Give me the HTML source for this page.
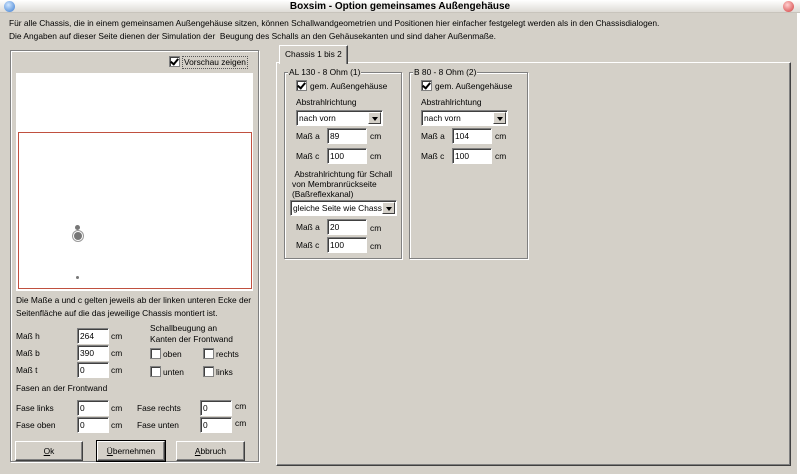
<!DOCTYPE html>
<html><head><meta charset="utf-8"><style>
*{box-sizing:border-box;margin:0;padding:0}
body{width:800px;height:474px;background:#d4d0c8;font-family:"Liberation Sans",sans-serif;font-size:8.4px;color:#000;position:relative;overflow:hidden}
.a{position:absolute;white-space:nowrap;line-height:11px}
.tb{position:absolute;left:0;top:0;width:800px;height:13px;background:linear-gradient(#fff,#dedbd6);border-bottom:1px solid #c8c4bc}
.in{position:absolute;background:#fff;border-top:1px solid #808080;border-left:1px solid #808080;border-bottom:1px solid #fff;border-right:1px solid #fff;box-shadow:inset 1px 1px 0 #404040;padding:1px 2px;line-height:12px;font-size:8.4px;white-space:nowrap;overflow:hidden}
.cb{position:absolute;width:11px;height:11px;background:#fff;border:1px solid #808080;box-shadow:inset 1px 1px 0 #404040}
.cb.c::after{content:"";position:absolute;left:2px;top:0px;width:3px;height:6px;border:solid #000;border-width:0 2px 2px 0;transform:rotate(40deg)}
.grp{position:absolute;border:1px solid #808080;box-shadow:1px 1px 0 #fff, inset 1px 1px 0 #fff}
.gl{position:absolute;background:#d4d0c8;padding:0 1px;line-height:11px;white-space:nowrap}
.btn{position:absolute;height:20px;border:1px solid;border-color:#fff #404040 #404040 #fff;box-shadow:inset -1px -1px 0 #808080;text-align:center;line-height:18px}
.sel .ar{position:absolute;right:1px;top:1px;width:13px;height:12px;background:#d4d0c8;border:1px solid;border-color:#fff #404040 #404040 #fff}
.sel .ar::after{content:"";position:absolute;left:3px;top:4px;border:3px solid transparent;border-top:4px solid #000}
</style></head><body>
<div class="tb"></div>
<div style="position:absolute;left:4px;top:1px;width:11px;height:11px;border-radius:50%;background:radial-gradient(circle at 40% 35%,#cfe6ff,#3a7bd0)"></div>
<div style="position:absolute;left:783px;top:1px;width:11px;height:11px;border-radius:50%;background:radial-gradient(circle at 40% 35%,#ffd0d0,#d23a3a)"></div>
<div class="a" style="left:0;width:800px;text-align:center;top:1px;font-weight:bold;font-size:10px">Boxsim - Option gemeinsames Außengehäuse</div>
<div style="position:absolute;left:797px;top:13px;width:3px;height:461px;background:#fff"></div>
<div class="a" style="left:9px;top:18px">Für alle Chassis, die in einem gemeinsamen Außengehäuse sitzen, können Schallwandgeometrien und Positionen hier einfacher festgelegt werden als in den Chassisdialogen.</div>
<div class="a" style="left:9px;top:31px">Die Angaben auf dieser Seite dienen der Simulation der&nbsp; Beugung des Schalls an den Gehäusekanten und sind daher Außenmaße.</div>

<div class="grp" style="left:10px;top:50px;width:249px;height:412px"></div>
<div class="cb c" style="left:169px;top:56px"></div>
<div class="a" style="left:182px;top:56px;border:1px dotted #555;padding:0 1px">Vorschau zeigen</div>
<div style="position:absolute;left:16px;top:73px;width:237px;height:218px;background:#fff"></div>
<div style="position:absolute;left:18px;top:132px;width:234px;height:157px;border:1px solid #c0503f"></div>
<div style="position:absolute;left:75px;top:225px;width:5px;height:5px;border-radius:50%;background:#777"></div>
<div style="position:absolute;left:74px;top:232px;width:8px;height:8px;border-radius:50%;background:#777;box-shadow:0 0 0 1px #fff,0 0 0 2px #999"></div>
<div style="position:absolute;left:76px;top:276px;width:3px;height:3px;border-radius:50%;background:#777"></div>

<div class="a" style="left:16px;top:295px">Die Maße a und c gelten jeweils ab der linken unteren Ecke der</div>
<div class="a" style="left:16px;top:308px">Seitenfläche auf die das jeweilige Chassis montiert ist.</div>
<div class="a" style="left:16px;top:331px">Maß h</div><div class="in" style="left:77px;top:328px;width:32px;height:16px">264</div><div class="a" style="left:111px;top:331px">cm</div>
<div class="a" style="left:16px;top:348px">Maß b</div><div class="in" style="left:77px;top:345px;width:32px;height:16px">390</div><div class="a" style="left:111px;top:348px">cm</div>
<div class="a" style="left:16px;top:365px">Maß t</div><div class="in" style="left:77px;top:362px;width:32px;height:16px">0</div><div class="a" style="left:111px;top:365px">cm</div>
<div class="a" style="left:150px;top:323px">Schallbeugung an</div>
<div class="a" style="left:150px;top:334px">Kanten der Frontwand</div>
<div class="cb" style="left:150px;top:348px"></div><div class="a" style="left:163px;top:349px">oben</div>
<div class="cb" style="left:203px;top:348px"></div><div class="a" style="left:216px;top:349px">rechts</div>
<div class="cb" style="left:150px;top:366px"></div><div class="a" style="left:163px;top:367px">unten</div>
<div class="cb" style="left:203px;top:366px"></div><div class="a" style="left:216px;top:367px">links</div>
<div class="a" style="left:16px;top:383px">Fasen an der Frontwand</div>
<div class="a" style="left:16px;top:403px">Fase links</div><div class="in" style="left:77px;top:400px;width:32px;height:16px">0</div><div class="a" style="left:111px;top:403px">cm</div>
<div class="a" style="left:137px;top:403px">Fase rechts</div><div class="in" style="left:200px;top:400px;width:32px;height:16px">0</div><div class="a" style="left:235px;top:401px">cm</div>
<div class="a" style="left:16px;top:420px">Fase oben</div><div class="in" style="left:77px;top:417px;width:32px;height:16px">0</div><div class="a" style="left:111px;top:420px">cm</div>
<div class="a" style="left:137px;top:420px">Fase unten</div><div class="in" style="left:200px;top:417px;width:32px;height:16px">0</div><div class="a" style="left:235px;top:418px">cm</div>

<div class="btn" style="left:15px;top:441px;width:68px"><u>O</u>k</div>
<div class="btn" style="left:97px;top:441px;width:68px;outline:1px solid #000"><u>Ü</u>bernehmen</div>
<div class="btn" style="left:176px;top:441px;width:69px"><u>A</u>bbruch</div>

<div style="position:absolute;left:276px;top:62px;width:515px;height:404px;border:1px solid;border-color:#fff #404040 #404040 #fff;box-shadow:inset -1px -1px 0 #808080"></div>
<div style="position:absolute;left:279px;top:45px;width:69px;height:19px;background:#d4d0c8;border:1px solid;border-color:#fff #404040 transparent #fff;border-bottom:none;box-shadow:inset -1px 0 0 #808080"></div>
<div class="a" style="left:285px;top:49px">Chassis 1 bis 2</div>

<div class="grp" style="left:284px;top:72px;width:118px;height:187px"></div>
<div class="gl" style="left:288px;top:67px">AL 130 - 8 Ohm (1)</div>
<div class="cb c" style="left:296px;top:80px"></div><div class="a" style="left:310px;top:81px">gem. Außengehäuse</div>
<div class="a" style="left:296px;top:97px">Abstrahlrichtung</div>
<div class="in sel" style="left:296px;top:110px;width:87px;height:16px">nach vorn<div class="ar"></div></div>
<div class="a" style="left:296px;top:131px">Maß a</div><div class="in" style="left:327px;top:128px;width:40px;height:16px">89</div><div class="a" style="left:370px;top:131px">cm</div>
<div class="a" style="left:296px;top:151px">Maß c</div><div class="in" style="left:327px;top:148px;width:40px;height:16px">100</div><div class="a" style="left:370px;top:151px">cm</div>
<div class="a" style="left:292px;top:169px">&nbsp;Abstrahlrichtung für Schall</div>
<div class="a" style="left:292px;top:179px">von Membranrückseite</div>
<div class="a" style="left:292px;top:189px">(Baßreflexkanal)</div>
<div class="in sel" style="left:290px;top:200px;width:107px;height:16px">gleiche Seite wie Chassis<div class="ar"></div></div>
<div class="a" style="left:296px;top:222px">Maß a</div><div class="in" style="left:327px;top:219px;width:40px;height:16px">20</div><div class="a" style="left:370px;top:223px">cm</div>
<div class="a" style="left:296px;top:240px">Maß c</div><div class="in" style="left:327px;top:237px;width:40px;height:16px">100</div><div class="a" style="left:370px;top:241px">cm</div>

<div class="grp" style="left:409px;top:72px;width:119px;height:187px"></div>
<div class="gl" style="left:413px;top:67px">B 80 - 8 Ohm (2)</div>
<div class="cb c" style="left:421px;top:80px"></div><div class="a" style="left:435px;top:81px">gem. Außengehäuse</div>
<div class="a" style="left:421px;top:97px">Abstrahlrichtung</div>
<div class="in sel" style="left:421px;top:110px;width:87px;height:16px">nach vorn<div class="ar"></div></div>
<div class="a" style="left:421px;top:131px">Maß a</div><div class="in" style="left:452px;top:128px;width:40px;height:16px">104</div><div class="a" style="left:495px;top:131px">cm</div>
<div class="a" style="left:421px;top:151px">Maß c</div><div class="in" style="left:452px;top:148px;width:40px;height:16px">100</div><div class="a" style="left:495px;top:151px">cm</div>
</body></html>
